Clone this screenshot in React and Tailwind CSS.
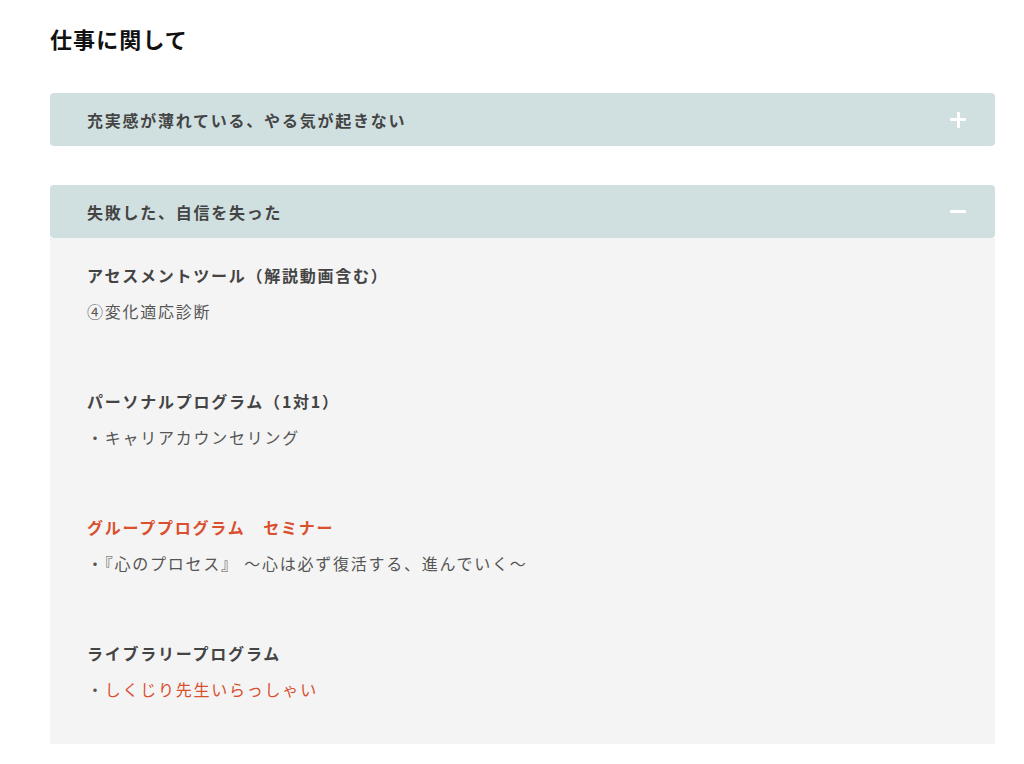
import React, { useState } from "react";

const font = "font-['Noto_Sans_CJK_JP','Noto_Sans',sans-serif]";

const items = [
  {
    title: "充実感が薄れている、やる気が起きない",
    blocks: [],
  },
  {
    title: "失敗した、自信を失った",
    blocks: [
      { head: "アセスメントツール（解説動画含む）", body: "④変化適応診断" },
      { head: "パーソナルプログラム（1対1）", body: "・キャリアカウンセリング" },
      {
        head: "グループプログラム　セミナー",
        headRed: true,
        body: "・『心のプロセス』 ～心は必ず復活する、進んでいく～",
      },
      { head: "ライブラリープログラム", body: "・", bodyRed: "しくじり先生いらっしゃい" },
    ],
  },
];

const Toggle = ({ open }) => (
  <span className="relative block w-[16px] h-[16px]">
    <span className="absolute left-0 top-[6.5px] w-[16px] h-[3px] bg-white rounded-[1px]" />
    {!open && (
      <span className="absolute top-0 left-[6.5px] w-[3px] h-[16px] bg-white rounded-[1px]" />
    )}
  </span>
);

export default function App() {
  const [open, setOpen] = useState(1);

  return (
    <div className={`${font} bg-white min-h-[764px] pl-[50px] pr-[29px] pt-[22px] text-[#333]`}>
      <h2 className="text-[22px] font-bold leading-[32px] tracking-[0.05em] text-[#111]">
        仕事に関して
      </h2>
      <div className="mt-[39px] flex flex-col gap-[39px]">
        {items.map((item, i) => (
          <div key={i}>
            <button
              className="w-full h-[53px] flex items-center justify-between bg-[#d0e0e0] rounded-[4px] pl-[37px] pr-[29px] text-left"
              onClick={() => setOpen(open === i ? -1 : i)}
            >
              <span className="text-[16px] font-bold tracking-[0.11em] text-[#444]">
                {item.title}
              </span>
              <Toggle open={open === i} />
            </button>
            {open === i && item.blocks.length > 0 && (
              <div className="bg-[#f4f4f4] pl-[37px] pr-[37px] pt-[19px] pb-[37px] flex flex-col gap-[54px]">
                {item.blocks.map((b, j) => (
                  <div key={j} className="text-[16px] leading-[36px] tracking-[0.11em]">
                    <p className={`font-bold ${b.headRed ? "text-[#d9502f]" : "text-[#444]"}`}>
                      {b.head}
                    </p>
                    <p className="text-[#555]">
                      {b.body}
                      {b.bodyRed && <span className="text-[#d9502f]">{b.bodyRed}</span>}
                    </p>
                  </div>
                ))}
              </div>
            )}
          </div>
        ))}
      </div>
    </div>
  );
}
